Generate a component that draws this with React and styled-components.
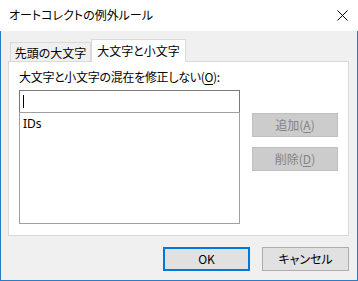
import React from 'react';
import styled, {createGlobalStyle} from "styled-components";

const GlobalStyle = createGlobalStyle`
html, body {
  margin: 0;
  padding: 0;
  background: #fff;
}
body {
  font-family: "Noto Sans CJK JP", "Noto Sans", sans-serif;
  font-size: 12px;
  font-feature-settings: "palt";
  color: #000;
}
* { box-sizing: border-box; }
`

const Window = styled.div`
display: flex;
flex-direction: column;
width: 358px;
height: 281px;
background: #fff;
`

const TitleBar = styled.div`
display: flex;
align-items: center;
justify-content: space-between;
height: 31px;
padding: 0 10px 1px 9px;
background: #fff;
`

const Title = styled.span`
font-size: 12px;
line-height: 16px;
`

const Body = styled.div`
flex: 1;
display: flex;
flex-direction: column;
background: #f0f0f0;
border: 1px solid #2b7bc6;
border-top: none;
padding: 8px 8px 0 7px;
`

const TabStrip = styled.div`
display: flex;
align-items: flex-end;
height: 22px;
padding-left: 2px;
`

const Tab = styled.div`
display: flex;
align-items: center;
justify-content: center;
width: ${({w}) => w}px;
height: ${({active}) => active ? 23 : 19}px;
border: 1px solid #d9d9d9;
border-bottom: none;
margin-bottom: ${({active}) => active ? -1 : 0}px;
background: ${({active}) => active ? "#fff" : "#f0f0f0"};
position: relative;
z-index: ${({active}) => active ? 1 : 0};
line-height: 16px;
padding-top: ${({active}) => active ? 0 : 1}px;
white-space: nowrap;
`

const Panel = styled.div`
display: flex;
gap: 12px;
width: 341px;
height: 175px;
background: #fff;
border: 1px solid #d9d9d9;
padding: 7px 0 0 10px;
`

const LeftCol = styled.div`
display: flex;
flex-direction: column;
width: 221px;
`

const Label = styled.div`
line-height: 16px;
margin-bottom: 5px;
letter-spacing: -0.3px;
white-space: nowrap;
`

const Key = styled.span`
text-decoration: underline;
text-underline-offset: 2px;
`

const Input = styled.div`
display: flex;
align-items: center;
height: 23px;
border: 1px solid #7a7a7a;
padding-left: 3px;
`

const Caret = styled.div`
width: 1px;
height: 13px;
background: #000;
`

const ListBox = styled.div`
height: 112px;
margin-top: -1px;
border: 1px solid #a0a0a0;
padding: 3px 0 0 3px;
line-height: 16px;
font-family: "Noto Sans", sans-serif;
`

const RightCol = styled.div`
display: flex;
flex-direction: column;
gap: 10px;
padding-top: 44px;
`

const Button = styled.div`
display: flex;
align-items: center;
justify-content: center;
width: ${({w}) => w || 87}px;
height: ${({h}) => h || 24}px;
line-height: 16px;
background: ${({disabled}) => disabled ? "#cccccc" : "#e1e1e1"};
color: ${({disabled}) => disabled ? "#838383" : "#000"};
border: ${({primary}) => primary ? "2px solid" : "1px solid"};
border-color: ${({primary, disabled}) => primary ? "#0078d7" : disabled ? "#bfbfbf" : "#adadad"};
white-space: nowrap;
`

const Footer = styled.div`
display: flex;
justify-content: flex-end;
gap: 12px;
padding-top: 11px;
`

const CloseIcon = () => (
    <svg width="11" height="11" viewBox="0 0 11 11">
        <path d="M0.5 0.5 L10.5 10.5 M10.5 0.5 L0.5 10.5" stroke="#000" strokeWidth="1" fill="none"/>
    </svg>
)

const App = () => {
    return (
        <Window>
            <GlobalStyle/>
            <TitleBar>
                <Title>オートコレクトの例外ルール</Title>
                <CloseIcon/>
            </TitleBar>
            <Body>
                <TabStrip>
                    <Tab w={81}>先頭の大文字</Tab>
                    <Tab w={95} active>大文字と小文字</Tab>
                </TabStrip>
                <Panel>
                    <LeftCol>
                        <Label>大文字と小文字の混在を修正しない(<Key>O</Key>):</Label>
                        <Input><Caret/></Input>
                        <ListBox>IDs</ListBox>
                    </LeftCol>
                    <RightCol>
                        <Button disabled w={86}>追加(<Key>A</Key>)</Button>
                        <Button disabled w={86}>削除(<Key>D</Key>)</Button>
                    </RightCol>
                </Panel>
                <Footer>
                    <Button primary>OK</Button>
                    <Button>キャンセル</Button>
                </Footer>
            </Body>
        </Window>
    );
};

export default App;
